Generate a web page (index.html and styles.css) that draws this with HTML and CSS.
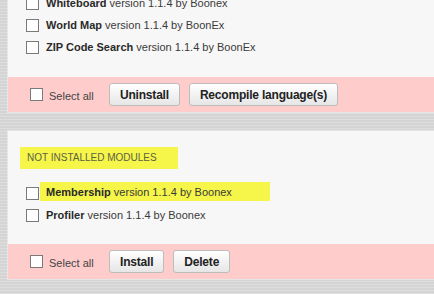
FILE: index.html
```html
<!DOCTYPE html>
<html lang="en">
<head>
    <meta charset="UTF-8">
    <meta name="viewport" content="width=device-width, initial-scale=1.0">
    <title>Modules</title>
    <link rel="stylesheet" href="styles.css">
</head>
<body>

    <div class="panel panel-installed">
        <div class="panel-body">
            <div class="row"><input type="checkbox" class="check"><span class="mod"><b>Whiteboard</b> version 1.1.4 by Boonex</span></div>
            <div class="row"><input type="checkbox" class="check"><span class="mod"><b>World Map</b> version 1.1.4 by BoonEx</span></div>
            <div class="row"><input type="checkbox" class="check"><span class="mod"><b>ZIP Code Search</b> version 1.1.4 by BoonEx</span></div>
        </div>
        <div class="panel-footer">
            <label class="select-all"><input type="checkbox" class="check">Select all</label>
            <button class="btn">Uninstall</button>
            <button class="btn">Recompile language(s)</button>
        </div>
    </div>

    <div class="panel panel-new">
        <div class="panel-body">
            <div class="title"><span class="mark">NOT INSTALLED MODULES</span></div>
            <div class="row"><input type="checkbox" class="check"><span class="mod mark mark-row"><b>Membership</b> version 1.1.4 by Boonex</span></div>
            <div class="row"><input type="checkbox" class="check"><span class="mod"><b>Profiler</b> version 1.1.4 by Boonex</span></div>
        </div>
        <div class="panel-footer">
            <label class="select-all"><input type="checkbox" class="check">Select all</label>
            <button class="btn">Install</button>
            <button class="btn">Delete</button>
        </div>
    </div>

</body>
</html>
```

FILE: styles.css
```css
body {
    margin: 0;
    height: 100vh;
    overflow: hidden;
    background-color: #d9d9d9;
    background-image: repeating-linear-gradient(0deg, rgba(255,255,255,0.12) 0 1px, rgba(0,0,0,0.025) 1px 3px);
    font-family: 'Liberation Sans', Arial, sans-serif;
    font-size: 11px;
    color: #3a3a3a;
}
.panel {
    margin-left: 7px;
    background: #f7f7f7;
    border: 1px solid #e6e6e6;
    border-right: none;
}
.panel-installed {
    margin-top: -9px;
}
.panel-new {
    margin-top: 17px;
}
.panel-installed .panel-body {
    padding: 0 0 19px 18px;
}
.panel-new .panel-body {
    padding: 16px 0 18px 12px;
}
.row {
    display: flex;
    align-items: center;
    height: 22px;
}
.panel-new .row {
    padding-left: 6px;
}
.check {
    appearance: none;
    -webkit-appearance: none;
    box-sizing: border-box;
    width: 13px;
    height: 13px;
    margin: 0;
    background: #fff;
    border: 1px solid #7a7a7a;
    flex: none;
}
.mod {
    margin-left: 7px;
}
.mod b {
    color: #2a2a2a;
}
.title {
    height: 22px;
    margin-bottom: 13px;
}
.mark {
    background: #f5f54a;
}
.title .mark {
    display: inline-block;
    height: 22px;
    line-height: 22px;
    padding: 0 21px 0 7px;
    font-size: 10px;
    color: #5f5f45;
}
.mark-row {
    display: inline-block;
    height: 19px;
    line-height: 20px;
    margin: 0 0 4px 1px;
    padding: 0 38px 0 6px;
}
.panel-footer {
    display: flex;
    align-items: center;
    gap: 9px;
    padding: 6px 0 6px 22px;
    background: #ffcccc;
}
.select-all {
    display: flex;
    align-items: center;
    width: 70px;
    color: #444;
    padding-top: 2px;
}
.select-all .check {
    margin-right: 6px;
    margin-top: -3px;
}
.btn {
    height: 23px;
    padding: 0 10px;
    font-family: 'Liberation Sans', Arial, sans-serif;
    font-size: 12px;
    font-weight: bold;
    letter-spacing: -0.2px;
    color: #222;
    background: linear-gradient(#ffffff, #e6e6e6);
    border: 1px solid #bcbcbc;
    border-radius: 3px;
}
```
